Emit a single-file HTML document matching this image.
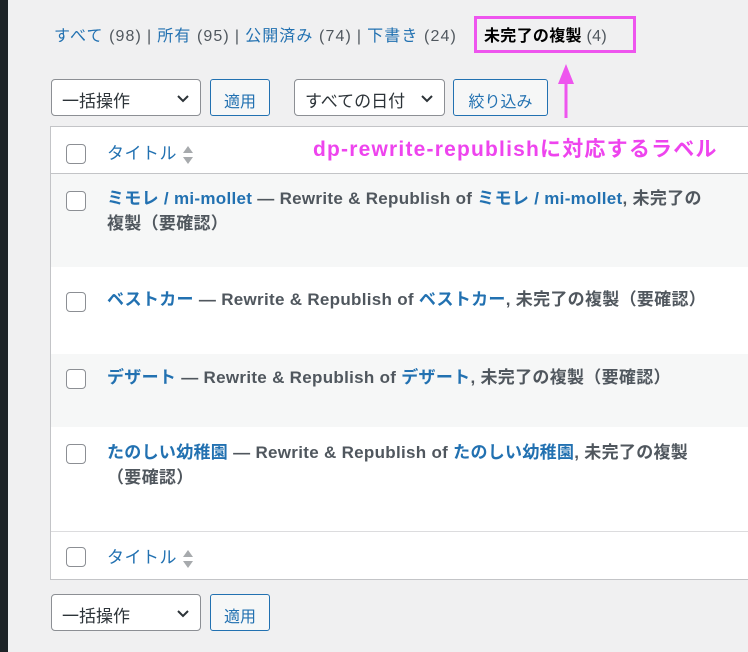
<!DOCTYPE html>
<html><head><meta charset="utf-8"><style>
*{box-sizing:border-box}
body{margin:0;width:748px;height:652px;overflow:hidden;background:#f0f0f1;font-family:"Liberation Sans","Noto Sans CJK JP",sans-serif;font-size:16px;color:#50575e;position:relative}
.side{position:absolute;left:0;top:0;width:8px;height:652px;background:#1d2327}
a{color:#2271b1;text-decoration:none}
.abs{position:absolute}
.sub{left:54px;top:22px;white-space:nowrap;font-size:16px;letter-spacing:1.1px}
.sub .sep{color:#50575e;margin:0 5px}
.cur{color:#000;font-weight:bold}
.box{left:474px;top:16px;width:162px;height:37px;border:3px solid #ee55ee}
.sel{height:37px;border:1px solid #8c8f94;border-radius:4px;background:#fff;color:#2c3338;font-size:17px;padding:7px 10px;}
.sel svg{position:absolute;right:10px;top:14px}
.btn{height:37px;border:1px solid #2271b1;border-radius:3px;background:#f6f7f7;color:#2271b1;font-size:16px;text-align:center;padding-top:8px}
.table{left:50px;top:126px;width:710px;height:454px;border:1px solid #c3c4c7;background:#fff}
.row{position:absolute;left:0;width:100%}
.cb{position:absolute;left:15px;width:20px;height:20px;border:1px solid #8c8f94;border-radius:4px;background:#fff}
.t{position:absolute;left:56px;font-weight:bold;font-size:17px;letter-spacing:0.3px;line-height:25px;color:#50575e;width:605px}
.hd{position:absolute;left:56px;color:#2271b1;font-size:17px;letter-spacing:0.5px}
.sort{display:inline-block;vertical-align:middle;margin-left:4px}
.pink{color:#ee44ee;font-weight:bold;font-size:21px;letter-spacing:1.2px;white-space:nowrap}
</style></head><body>
<div class="side"></div>
<div class="abs sub"><a>すべて</a> (98)<span class="sep">|</span><a>所有</a> (95)<span class="sep">|</span><a>公開済み</a> (74)<span class="sep">|</span><a>下書き</a> (24)</div>
<div class="abs" style="left:484px;top:22px;white-space:nowrap;font-size:16px;letter-spacing:0.3px"><span class="cur">未完了の複製</span> (4)</div>
<div class="abs box"></div>
<div class="abs sel" style="left:51px;top:79px;width:150px">一括操作<svg width="14" height="9" viewBox="0 0 14 9"><path d="M2 2l5 5 5-5" stroke="#2c3338" stroke-width="2" fill="none"/></svg></div>
<div class="abs btn" style="left:210px;top:79px;width:60px">適用</div>
<div class="abs sel" style="left:294px;top:79px;width:151px">すべての日付<svg width="14" height="9" viewBox="0 0 14 9"><path d="M2 2l5 5 5-5" stroke="#2c3338" stroke-width="2" fill="none"/></svg></div>
<div class="abs btn" style="left:453px;top:79px;width:95px">絞り込み</div>
<svg class="abs" style="left:555px;top:62px" width="22" height="56" viewBox="0 0 22 56"><path d="M11 10V56" stroke="#ee55ee" stroke-width="3"/><path d="M3 22L11 2 19 22z" fill="#ee55ee"/></svg>
<div class="abs table">
 <div class="row" style="top:0;height:47px;border-bottom:1px solid #c3c4c7">
  <div class="cb" style="top:17px"></div>
  <div class="hd" style="top:12px">タイトル<svg class="sort" width="14" height="22" viewBox="0 0 14 22"><path d="M7 2l5 7H2zM7 20l5-7H2z" fill="#a7aaad"/></svg></div>
  <div class="abs pink" style="left:262px;top:6px">dp-rewrite-republishに対応するラベル</div>
 </div>
 <div class="row" style="top:47px;height:93px;background:#f6f7f7">
  <div class="cb" style="top:17px"></div>
  <div class="t" style="top:12px"><a>ミモレ / mi-mollet</a> — Rewrite &amp; Republish of <a>ミモレ / mi-mollet</a>, 未完了の複製（要確認）</div>
 </div>
 <div class="row" style="top:140px;height:87px;background:#fff">
  <div class="cb" style="top:25px"></div>
  <div class="t" style="top:20px"><a>ベストカー</a> — Rewrite &amp; Republish of <a>ベストカー</a>, 未完了の複製（要確認）</div>
 </div>
 <div class="row" style="top:227px;height:73px;background:#f6f7f7">
  <div class="cb" style="top:15px"></div>
  <div class="t" style="top:11px"><a>デザート</a> — Rewrite &amp; Republish of <a>デザート</a>, 未完了の複製（要確認）</div>
 </div>
 <div class="row" style="top:300px;height:105px;background:#fff;border-bottom:1px solid #dcdcde">
  <div class="cb" style="top:17px"></div>
  <div class="t" style="top:13px"><a>たのしい幼稚園</a> — Rewrite &amp; Republish of <a>たのしい幼稚園</a>, 未完了の複製<br>（要確認）</div>
 </div>
 <div class="row" style="top:405px;height:48px">
  <div class="cb" style="top:15px"></div>
  <div class="hd" style="top:11px">タイトル<svg class="sort" width="14" height="22" viewBox="0 0 14 22"><path d="M7 2l5 7H2zM7 20l5-7H2z" fill="#a7aaad"/></svg></div>
 </div>
</div>
<div class="abs sel" style="left:51px;top:594px;width:150px">一括操作<svg width="14" height="9" viewBox="0 0 14 9"><path d="M2 2l5 5 5-5" stroke="#2c3338" stroke-width="2" fill="none"/></svg></div>
<div class="abs btn" style="left:210px;top:594px;width:60px">適用</div>
</body></html>
